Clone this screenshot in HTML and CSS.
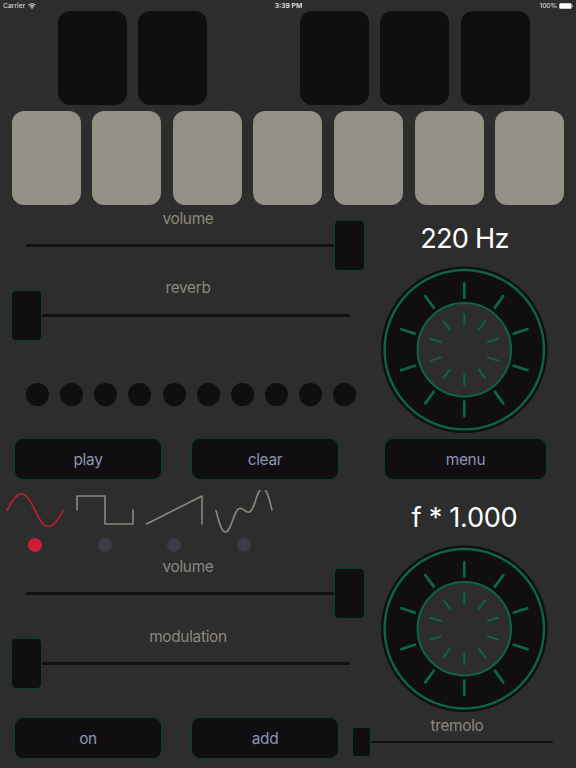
FILE: index.html
```html
<!DOCTYPE html>
<html lang="en">
<head>
<meta charset="utf-8">
<title>Synth</title>
<link rel="stylesheet" href="styles.css">
</head>
<body>
<svg width="0" height="0" class="defs">
  <defs>
    <g id="ticks">
      <path class="tick-outer" d="M0-66.3V-52"/>
      <path class="tick-inner" d="M0-35.5V-24.8"/>
    </g>
    <symbol id="dial" viewBox="-84.3 -83.7 168 168">
      <circle r="83.3" fill="#100e11"/>
      <circle r="79.7" class="ring-outer"/>
      <circle r="46.7" class="ring-inner"/>
      <use href="#ticks"/>
      <use href="#ticks" transform="rotate(36)"/>
      <use href="#ticks" transform="rotate(72)"/>
      <use href="#ticks" transform="rotate(108)"/>
      <use href="#ticks" transform="rotate(144)"/>
      <use href="#ticks" transform="rotate(180)"/>
      <use href="#ticks" transform="rotate(216)"/>
      <use href="#ticks" transform="rotate(252)"/>
      <use href="#ticks" transform="rotate(288)"/>
      <use href="#ticks" transform="rotate(324)"/>
    </symbol>
  </defs>
</svg>
<main class="app">
  <header class="status">
    <div class="carrier"><span>Carrier</span>
      <svg width="8" height="6" viewBox="0 0 8 6"><path d="M.5 2.2a5 5 0 0 1 7 0M1.9 3.6a3 3 0 0 1 4.2 0" fill="none" stroke="#ddd" stroke-width="1.1"/><path d="M4 5.9 2.8 4.6a1.8 1.8 0 0 1 2.4 0z" fill="#ddd"/></svg>
    </div>
    <div class="time">3:39 PM</div>
    <div class="power"><span>100%</span>
      <svg width="14" height="6" viewBox="0 0 14 6"><rect x=".3" y=".3" width="12.2" height="5.4" rx="1" fill="#fff"/><path d="M13 2v2q.8-.3.8-1T13 2" fill="#fff"/></svg>
    </div>
  </header>
  <section class="keyboard">
    <div class="keys sharps"><i></i><i></i><i class="after-gap"></i><i></i><i></i></div>
    <div class="keys naturals"><i></i><i></i><i></i><i></i><i></i><i></i><i></i></div>
  </section>
  <section class="panel">
    <div class="left">
      <div class="label">volume</div>
      <div class="slider max"><b></b></div>
      <div class="label">reverb</div>
      <div class="slider min"><b></b></div>
      <div class="steps"><i></i><i></i><i></i><i></i><i></i><i></i><i></i><i></i><i></i><i></i></div>
      <div class="buttons"><button>play</button><button>clear</button></div>
    </div>
    <div class="right">
      <div class="readout hz">220 Hz</div>
      <svg class="dial" width="168" height="168"><use href="#dial"/></svg>
      <button class="menu">menu</button>
    </div>
  </section>
  <section class="panel oscillator">
    <div class="left">
      <div class="waves">
        <div class="wave active"><svg width="70" height="46"><path d="M7 20.5C11 12.5 16 4 21.3 4C33 4 37 36.5 48.5 36.5C54 36.5 59 28.5 63 20.5"/></svg><i></i></div>
        <div class="wave"><svg width="70" height="46"><path d="M7 20V6H35V34H63V20"/></svg><i></i></div>
        <div class="wave"><svg width="70" height="46"><path d="M7.5 34L63 6V34"/></svg><i></i></div>
        <div class="wave"><svg width="70" height="46"><path d="M7 20.5C9 28 12 42 16.4 42C22.5 42 25 18.2 31 18.2C35 18.2 36 22.2 39.5 22.2C46 22.2 47.5-2 53.8-2C58 -2 61 12 63 20"/></svg><i></i></div>
      </div>
      <div class="label">volume</div>
      <div class="slider max"><b></b></div>
      <div class="label">modulation</div>
      <div class="slider min"><b></b></div>
      <div class="buttons"><button>on</button><button>add</button></div>
    </div>
    <div class="right">
      <div class="readout">f * 1.000</div>
      <svg class="dial" width="168" height="168"><use href="#dial"/></svg>
      <div class="label tremolo">tremolo</div>
      <div class="slider small"><b></b></div>
    </div>
  </section>
</main>
</body>
</html>
```

FILE: styles.css
```css
* { box-sizing: border-box; }
body {
  margin: 0;
  background: #2d2d2d;
  font-family: Inter, "Liberation Sans", sans-serif;
  overflow: hidden;
}
.defs { position: absolute; }
.app { width: 576px; height: 768px; display: flex; flex-direction: column; }

.status {
  height: 11px;
  display: grid;
  grid-template-columns: 1fr auto 1fr;
  align-items: center;
  padding: 0 3px;
  color: #e2e2e2;
  font-size: 6.8px;
  line-height: 11px;
}
.carrier, .power { display: flex; align-items: center; gap: 3px; }
.carrier { gap: 2.5px; }
.power { justify-content: flex-end; gap: 2px; letter-spacing: -0.15px; }
.time { font-weight: 600; padding-left: 1px; }

.keyboard { height: 199px; flex: none; }
.keys { display: flex; gap: 11.65px; padding-left: 11.5px; }
.keys i { width: 69px; height: 94px; border-radius: 12px; flex: none; }
.sharps { padding-left: 57.8px; margin-bottom: 6px; }
.sharps i { background: #100e11; }
.sharps .after-gap { margin-left: 80.65px; }
.naturals i { background: #949085; }

.panel {
  height: 279px;
  flex: none;
  display: flex;
  border-top: 1px solid #282828;
}
.left { width: 376px; }
.right { width: 177px; display: flex; flex-direction: column; align-items: center; }

.label {
  height: 16px;
  line-height: 16px;
  font-size: 15.4px;
  letter-spacing: -0.3px;
  text-align: center;
  color: #8c887e;
}
.left .label { width: 324px; margin-left: 26px; }
.slider {
  position: relative;
  width: 324px;
  height: 3px;
  margin: 17px 0 33px 26px;
  border-radius: 1px;
  background: #111;
}
.slider b {
  position: absolute;
  left: -15px;
  top: -24px;
  width: 31px;
  height: 51px;
  border: 1px solid #0a402f;
  border-radius: 5px;
  background: #100e11;
}
.slider.max b { left: 308px; }
.slider.min { margin-top: 18px; }

.steps { display: flex; gap: 11.15px; margin: 66px 0 0 26px; }
.steps i { width: 23px; height: 23px; border-radius: 50%; background: #100e11; }

.buttons { display: flex; gap: 29px; margin: 32px 0 0 14px; }
button {
  width: 148px;
  height: 42px;
  padding: 1px 0 0;
  border: 1px solid #0a402f;
  border-radius: 9px;
  background: #100e11;
  color: #9095b5;
  font: 15.4px Inter, "Liberation Sans", sans-serif;
  letter-spacing: -0.3px;
}
.menu { width: 163px; margin: 4px 0 0 2px; }

.readout {
  color: #fff;
  font-size: 27.2px;
  letter-spacing: -0.3px;
  line-height: 32px;
  margin-top: 12px;
  height: 43px;
  white-space: nowrap;
}
.hz { letter-spacing: -0.75px; }
.dial { display: block; margin-left: -1px; }
.ring-outer { fill: none; stroke: #0b6647; stroke-width: 2.4; }
.ring-inner { fill: #2d2d2d; stroke: #0b6647; stroke-width: 2; }
.tick-outer { stroke: #0b6647; stroke-width: 2.8; stroke-linecap: round; }
.tick-inner { stroke: #0b6647; stroke-width: 2; stroke-linecap: round; }

.oscillator .left { display: flex; flex-direction: column; }
.waves { display: flex; height: 69px; }
.wave { width: 69.7px; display: flex; flex-direction: column; align-items: center; }
.wave svg { display: block; height: 48px; overflow: hidden; }
.wave path { fill: none; stroke: #8c887e; stroke-width: 1.6; stroke-linejoin: round; stroke-linecap: round; }
.wave i { width: 14px; height: 14px; border-radius: 50%; background: #3d3b46; }
.wave.active path { stroke: #c71c37; }
.wave.active i { background: #cf1c38; }
.oscillator .slider.max { margin-top: 16.5px; margin-bottom: 34px; }
.oscillator .slider.min { margin-top: 17.5px; }
.oscillator .buttons { margin-top: 19px; }
.tremolo { margin: 4.5px 0 0 -15px; }
.slider.small { width: 191px; height: 2px; margin: 7.4px 0 0 -15px; flex: none; }
.small b { left: -10px; top: -14px; width: 19px; height: 30px; border-radius: 3px; }
```
